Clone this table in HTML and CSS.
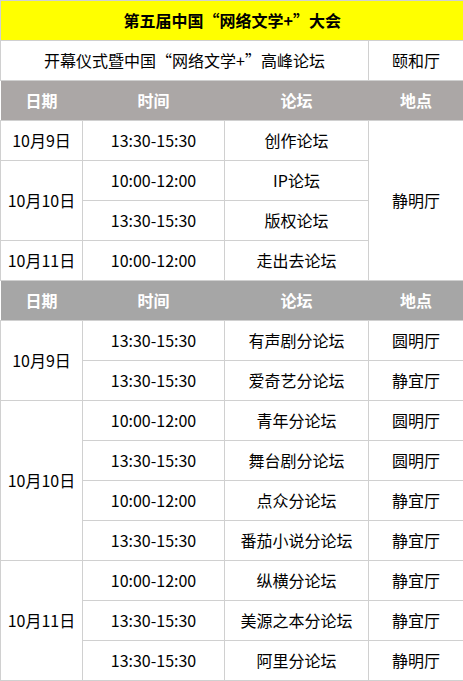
FILE: index.html
```html
<!DOCTYPE html>
<html lang="zh-CN">
<head>
<meta charset="utf-8">
<title>第五届中国“网络文学+”大会</title>
<link rel="stylesheet" href="styles.css">
</head>
<body>
<table class="schedule">
  <colgroup>
    <col class="c-date">
    <col class="c-time">
    <col class="c-forum">
    <col class="c-place">
  </colgroup>
  <tbody>
    <tr class="title-row"><td colspan="4">第五届中国“网络文学+”大会</td></tr>
    <tr><td colspan="3">开幕仪式暨中国“网络文学+”高峰论坛</td><td>颐和厅</td></tr>
    <tr class="head head-a"><th>日期</th><th>时间</th><th>论坛</th><th>地点</th></tr>
    <tr><td>10月9日</td><td>13:30-15:30</td><td>创作论坛</td><td rowspan="4">静明厅</td></tr>
    <tr><td rowspan="2">10月10日</td><td>10:00-12:00</td><td>IP论坛</td></tr>
    <tr><td>13:30-15:30</td><td>版权论坛</td></tr>
    <tr><td>10月11日</td><td>10:00-12:00</td><td>走出去论坛</td></tr>
    <tr class="head head-b"><th>日期</th><th>时间</th><th>论坛</th><th>地点</th></tr>
    <tr><td rowspan="2">10月9日</td><td>13:30-15:30</td><td>有声剧分论坛</td><td>圆明厅</td></tr>
    <tr><td>13:30-15:30</td><td>爱奇艺分论坛</td><td>静宜厅</td></tr>
    <tr><td rowspan="4">10月10日</td><td>10:00-12:00</td><td>青年分论坛</td><td>圆明厅</td></tr>
    <tr><td>13:30-15:30</td><td>舞台剧分论坛</td><td>圆明厅</td></tr>
    <tr><td>10:00-12:00</td><td>点众分论坛</td><td>静宜厅</td></tr>
    <tr><td>13:30-15:30</td><td>番茄小说分论坛</td><td>静宜厅</td></tr>
    <tr><td rowspan="3">10月11日</td><td>10:00-12:00</td><td>纵横分论坛</td><td>静宜厅</td></tr>
    <tr><td>13:30-15:30</td><td>美源之本分论坛</td><td>静宜厅</td></tr>
    <tr><td>13:30-15:30</td><td>阿里分论坛</td><td>静明厅</td></tr>
  </tbody>
</table>
</body>
</html>
```
FILE: styles.css
```css
html, body {
  margin: 0;
  padding: 0;
  background: #ffffff;
}
body {
  font-family: "Noto Sans CJK SC", "Noto Sans", sans-serif;
  font-size: 16px;
  color: #000000;
}
.schedule {
  width: 463px;
  border-collapse: collapse;
  table-layout: fixed;
}
.c-date { width: 82px; }
.c-time { width: 142px; }
.c-forum { width: 144px; }
.c-place { width: 95px; }
.schedule td,
.schedule th {
  height: 37px;
  padding: 0 0 2px 0;
  border: 1px solid #d0d0d0;
  text-align: center;
  vertical-align: middle;
  line-height: 20px;
  font-weight: normal;
}
.title-row td {
  background: #ffff00;
  font-weight: bold;
  border-right: none;
  border-bottom: none;
}
.head th {
  color: #ffffff;
  font-weight: bold;
  border-left: none;
  border-right: none;
}
.head-a th { background: #aba7a6; }
.head-b th { background: #a6a6a6; }
```
